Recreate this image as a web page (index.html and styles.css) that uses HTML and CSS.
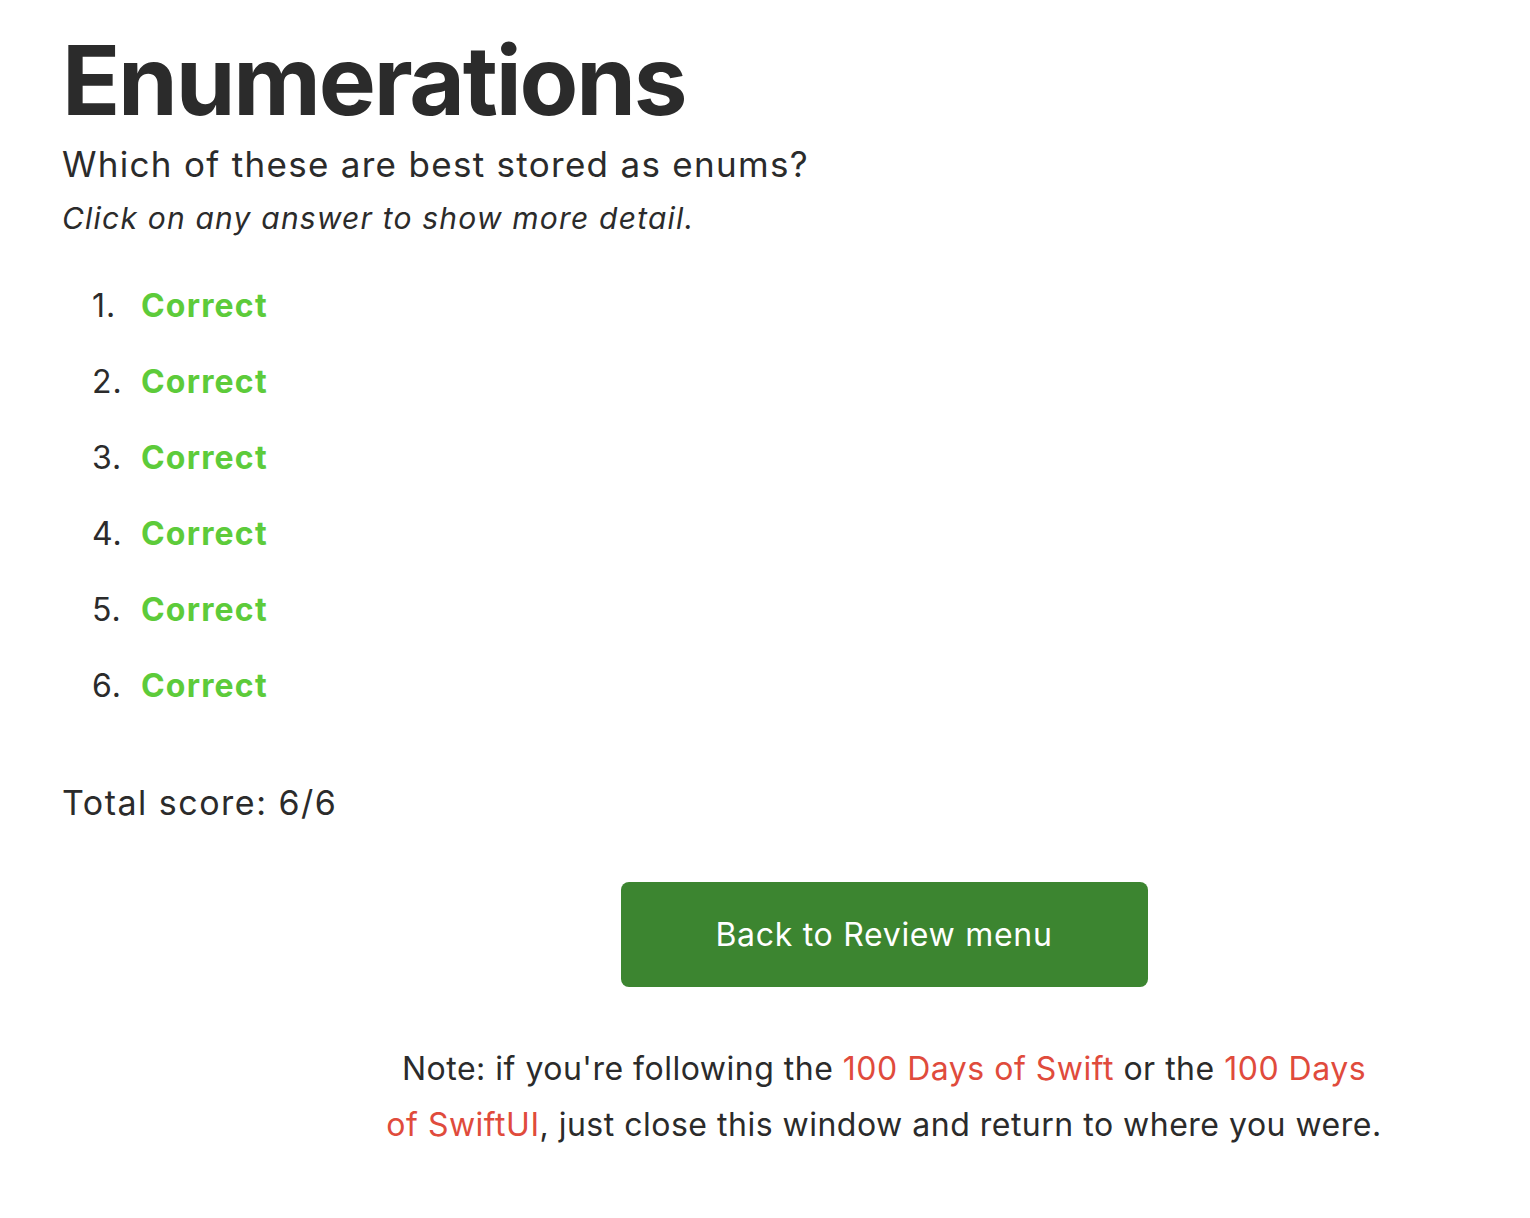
FILE: index.html
```html
<!DOCTYPE html>
<html lang="en">
<head>
<meta charset="utf-8">
<title>Enumerations</title>
<link rel="stylesheet" href="styles.css">
</head>
<body>
<main class="page">
  <h1 class="title">Enumerations</h1>
  <p class="question">Which of these are best stored as enums?</p>
  <p class="hint">Click on any answer to show more detail.</p>
  <ol class="answers">
    <li><span class="correct">Correct</span></li>
    <li><span class="correct">Correct</span></li>
    <li><span class="correct">Correct</span></li>
    <li><span class="correct">Correct</span></li>
    <li><span class="correct">Correct</span></li>
    <li><span class="correct">Correct</span></li>
  </ol>
  <p class="score">Total score: 6/6</p>
  <div class="footer">
    <a class="button" href="#">Back to Review menu</a>
    <p class="note">Note: if you're following the <a href="#">100 Days of Swift</a> or the <a href="#">100 Days of SwiftUI</a>, just close this window and return to where you were.</p>
  </div>
</main>
</body>
</html>
```
FILE: styles.css
```css
html, body {
  margin: 0;
  padding: 0;
  background: #fff;
}
body {
  font-family: Inter, "Liberation Sans", sans-serif;
  color: #2b2b2b;
}
.page {
  padding: 22px 0 0 62px;
}
.title {
  margin: 0;
  font-size: 96px;
  font-weight: 700;
  line-height: 116px;
  letter-spacing: -2.2px;
}
.question {
  margin: 2px 0 0;
  font-size: 35px;
  line-height: 48px;
  letter-spacing: 1.3px;
}
.hint {
  margin: 8px 0 0;
  font-size: 30px;
  font-style: italic;
  line-height: 44px;
  letter-spacing: 1.2px;
}
.answers {
  list-style: none;
  counter-reset: item;
  margin: 44px 0 0;
  padding-left: 30px;
  font-size: 32px;
  line-height: 44px;
}
.answers li {
  counter-increment: item;
  display: flex;
  margin-bottom: 32px;
}
.answers li::before {
  content: counter(item) ".";
  width: 49px;
  flex: none;
  letter-spacing: 1px;
}
.correct {
  color: #5dcb3a;
  font-weight: 700;
  letter-spacing: 1.2px;
}
.score {
  margin: 71px 0 0;
  font-size: 34px;
  line-height: 48px;
  letter-spacing: 1.5px;
}
.footer {
  margin: 55px 0 0 324px;
  width: 996px;
  display: flex;
  flex-direction: column;
  align-items: center;
}
.button {
  display: flex;
  align-items: center;
  justify-content: center;
  width: 527px;
  height: 105px;
  background: #3c8530;
  border-radius: 8px;
  color: #fff;
  font-size: 32px;
  letter-spacing: 0.7px;
  text-decoration: none;
}
.note {
  margin: 54px 0 0;
  text-align: center;
  font-size: 32px;
  line-height: 56px;
  letter-spacing: 0.5px;
  width: 996px;
}
.note a {
  color: #e04b3c;
  text-decoration: none;
}
```
